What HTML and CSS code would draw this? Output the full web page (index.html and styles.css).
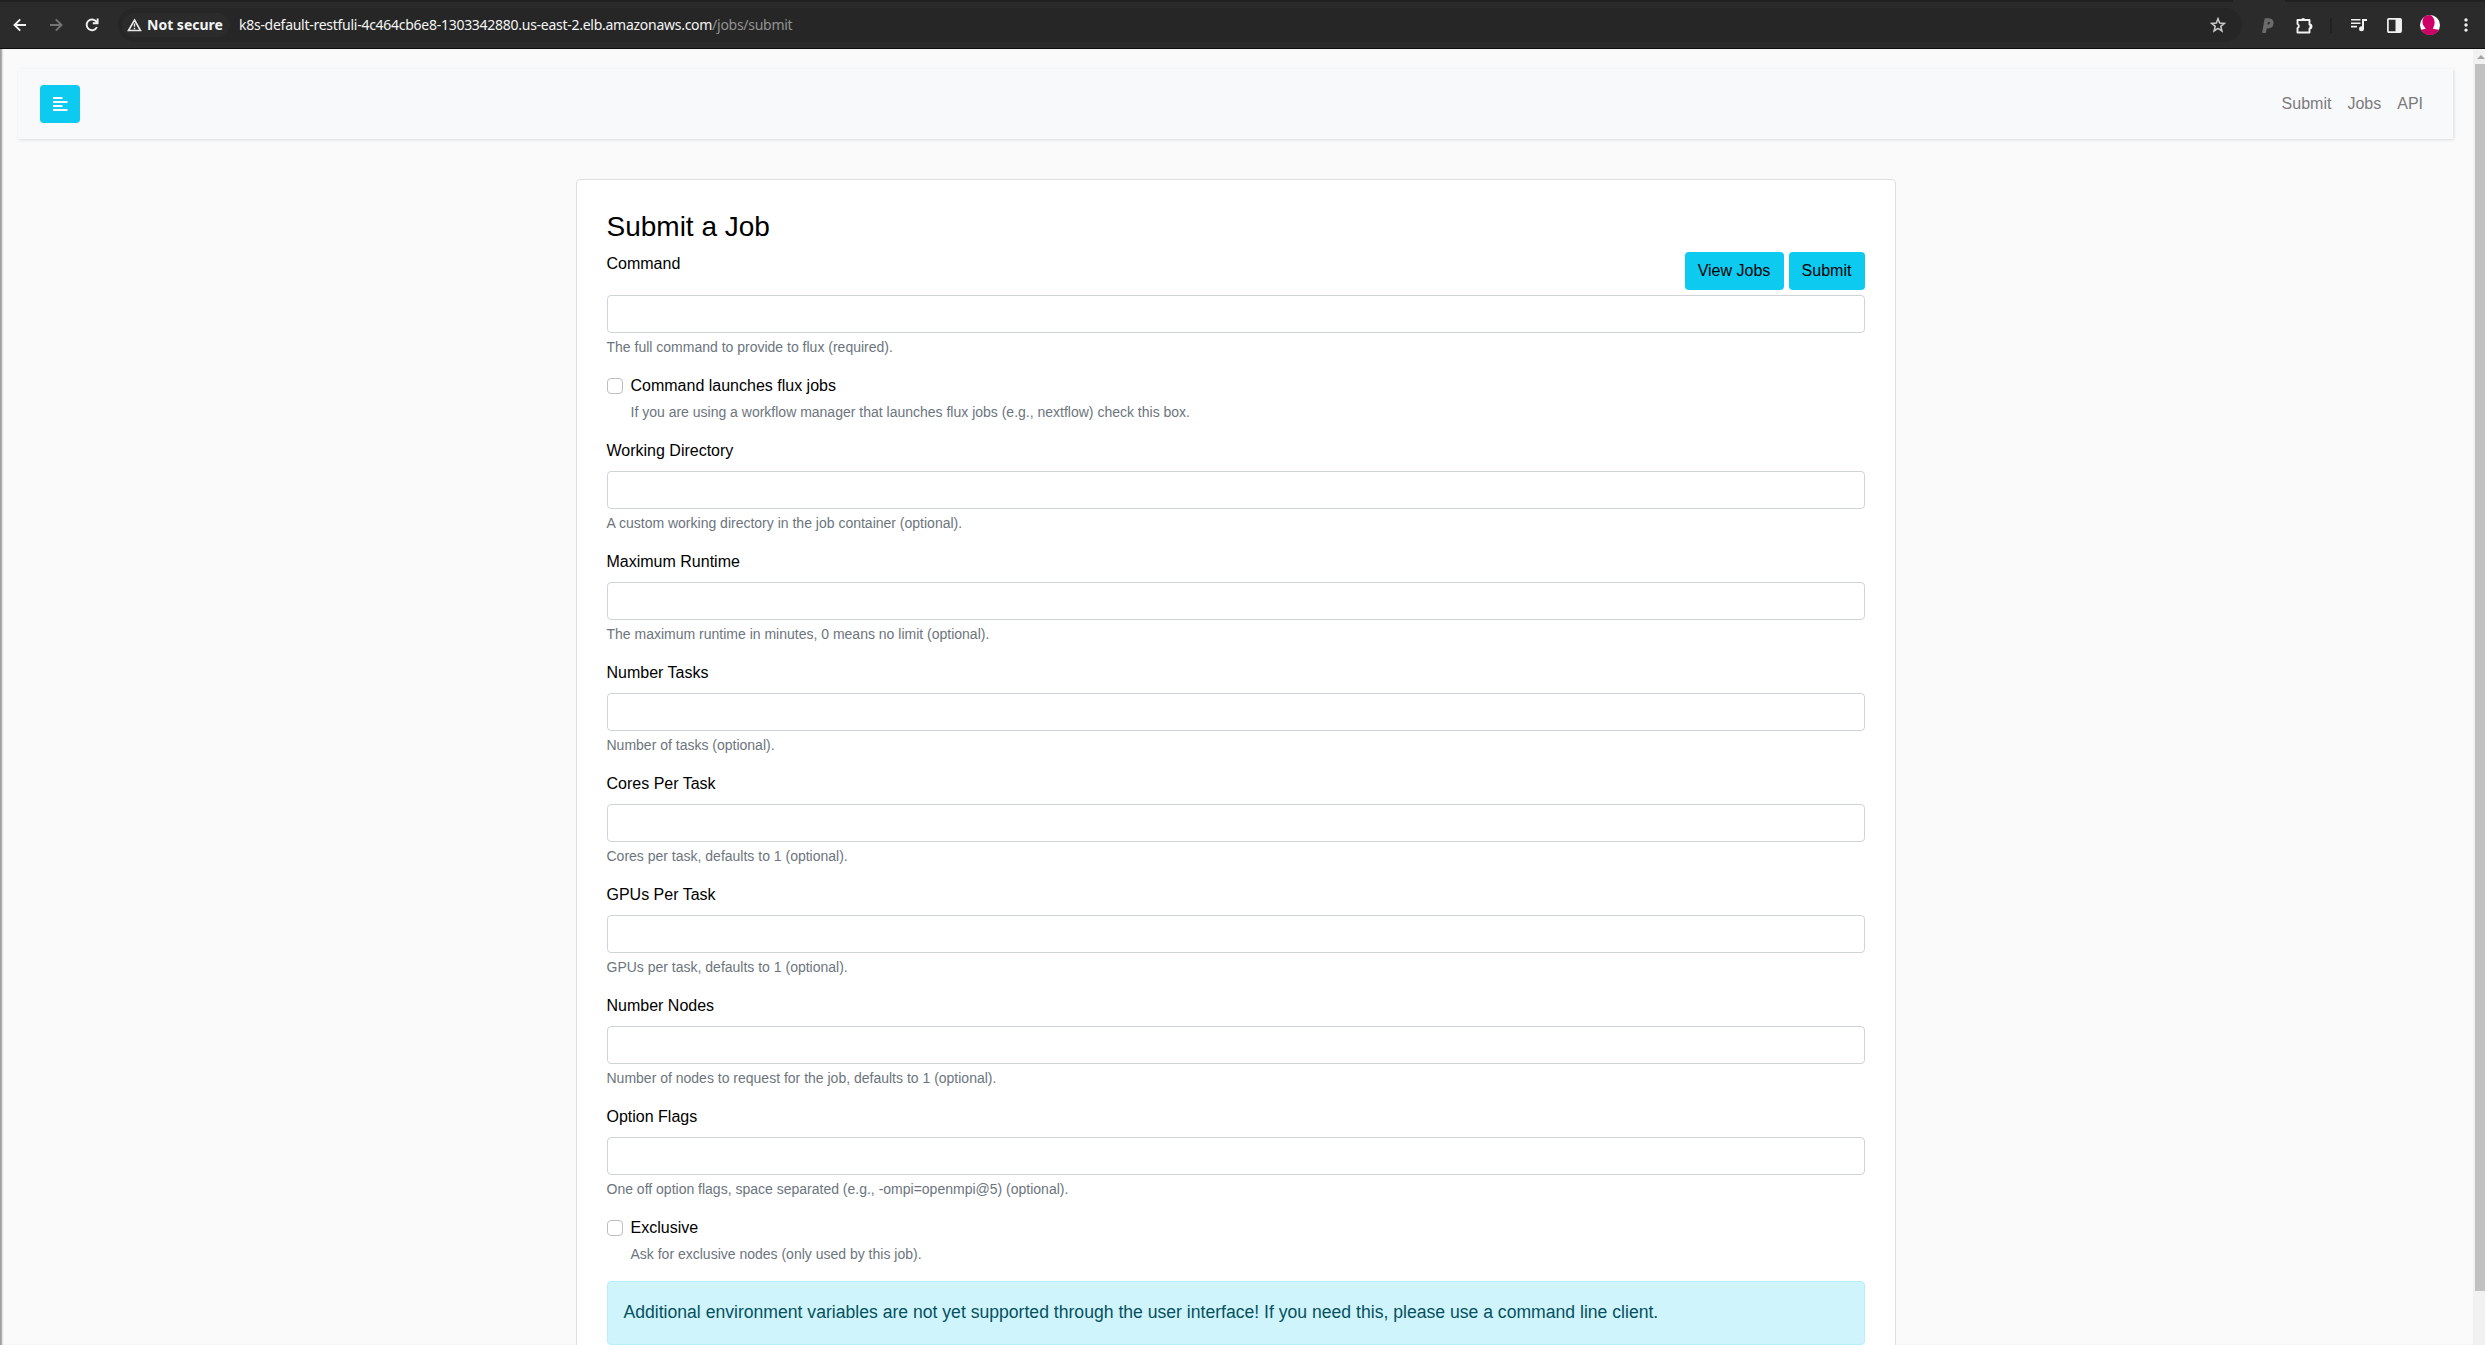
FILE: index.html
```html
<!DOCTYPE html>
<html lang="en">
<head>
<meta charset="utf-8">
<title>Submit a Job</title>
<link rel="stylesheet" href="styles.css">
</head>
<body>
<header class="toolbar">
  <span class="active-tab"></span>
  <svg class="tool back" width="14" height="14" viewBox="0 0 14 14" fill="none" stroke="#f1f1f1" stroke-width="1.9"><path d="M13 7H2M7.2 1.3 1.5 7l5.7 5.7"/></svg>
  <svg class="tool forward" width="14" height="14" viewBox="0 0 14 14" fill="none" stroke="#757575" stroke-width="1.9"><path d="M1 7h11M6.800 1.300 12.500 7l-5.700 5.700"/></svg>
  <svg class="tool" width="14" height="14" viewBox="0 0 14 14" fill="none" stroke="#f1f1f1" stroke-width="1.9"><path d="M11.900 9.200A5.400 5.400 0 1 1 11.300 3.500L12.500 4.800M12.600 .4v4.900H7.800"/></svg>
  <div class="omnibox">
    <div class="security">
      <svg width="15" height="14" viewBox="0 0 15 14" fill="none" stroke="#e8e8e8" stroke-width="1.6"><path d="M7.500 2 13.500 12.500h-12z"/><path d="M7.500 5.500v3.300M7.500 9.800v1.400" stroke-width="1.400"/></svg>
      <span class="security-text">Not secure</span>
    </div>
    <div class="url">k8s-default-restfuli-4c464cb6e8-1303342880.us-east-2.elb.amazonaws.com<span class="path">/jobs/submit</span></div>
    <svg class="star" width="16" height="16" viewBox="0 0 16 16" fill="none" stroke="#c8c8c8" stroke-width="1.6"><path d="m8 1.800 1.700 4.300 4.600.3-3.500 3 1.100 4.500L8 11.400l-3.900 2.500 1.100-4.500-3.500-3 4.600-.3z"/></svg>
  </div>
  <div class="actions">
    <svg width="12" height="15" viewBox="0 0 12 15" fill="none" stroke="#6b6b6b" stroke-width="3.8"><path d="M2 15 4.300 2.200h2.700c3.800 0 3.600 6.300-1 6.300H4"/></svg>
    <svg class="puzzle" width="18" height="17" viewBox="0 0 18 17"><path d="M2.500 3h12v4.500a2 2 0 0 1 0 4V15.500h-12v-4.300a2.300 2.300 0 0 0 0-4.200z" fill="none" stroke="#f1f1f1" stroke-width="1.900" stroke-linejoin="round"/><path d="M6.200 3a2 2 0 0 1 4 0zM14.500 7.300a2 2 0 0 1 0 4z" fill="#f1f1f1"/></svg>
    <span class="divider"></span>
    <svg class="queue" width="16" height="13" viewBox="0 0 16 13" fill="#f1f1f1"><path d="M0 0h9.500v1.600H0zM0 3.400h9.500V5H0zM0 6.800h6v1.600H0zM11 0h5v2h-3v8h-2z"/><circle cx="10.500" cy="9.700" r="2.500"/></svg>
    <svg class="panel" width="15" height="15" viewBox="0 0 15 15"><rect x=".9" y=".9" width="13.200" height="13.200" rx="1" fill="none" stroke="#f1f1f1" stroke-width="1.700"/><path d="M8.500 1H14v13H8.500z" fill="#f1f1f1"/></svg>
    <svg class="avatar" width="20" height="20" viewBox="0 0 20 20"><circle cx="10" cy="10" r="10" fill="#fff"/><path d="M8 .2C4 1 2 4 2.500 7.500c.3 3.500 2.700 4.700 3.300 6.300L1.200 14.800A10 10 0 0 0 18.800 14.800L13 13.800c.2-1.800 1.900-3.500 1.600-7C14.300 3 12 .8 10 0z" fill="#cd0067"/></svg>
    <svg class="more" width="4" height="14" viewBox="0 0 4 14" fill="#f1f1f1"><circle cx="2" cy="1.900" r="1.700"/><circle cx="2" cy="7" r="1.700"/><circle cx="2" cy="12.100" r="1.700"/></svg>
  </div>
</header>
<div class="viewport">
  <div class="page">
    <nav class="navbar">
      <button class="btn menu" type="button" aria-label="Toggle sidebar">
        <svg width="15" height="14" viewBox="0 0 15 14" fill="#fff"><path d="M0 0h9.500v2H0zM0 4h14.500v2H0zM0 8h9.500v2H0zM0 12h14.500v2H0z"/></svg>
      </button>
      <div class="links"><a>Submit</a><a>Jobs</a><a>API</a></div>
    </nav>
    <main class="card">
      <h1>Submit a Job</h1>
      <div class="field command">
        <div class="command-head"><label for="command">Command</label><div class="buttons"><button class="btn view" type="button">View Jobs</button><button class="btn submit" type="button">Submit</button></div></div>
        <input class="control" id="command"><div class="help">The full command to provide to flux (required).</div>
      </div>
      <div class="check"><input type="checkbox" id="launcher"><div><label for="launcher">Command launches flux jobs</label><div class="help">If you are using a workflow manager that launches flux jobs (e.g., nextflow) check this box.</div></div></div>
      <div class="field"><label for="workdir">Working Directory</label><input class="control" id="workdir"><div class="help">A custom working directory in the job container (optional).</div></div>
      <div class="field"><label for="runtime">Maximum Runtime</label><input class="control" id="runtime"><div class="help">The maximum runtime in minutes, 0 means no limit (optional).</div></div>
      <div class="field"><label for="tasks">Number Tasks</label><input class="control" id="tasks"><div class="help">Number of tasks (optional).</div></div>
      <div class="field"><label for="cores">Cores Per Task</label><input class="control" id="cores"><div class="help">Cores per task, defaults to 1 (optional).</div></div>
      <div class="field"><label for="gpus">GPUs Per Task</label><input class="control" id="gpus"><div class="help">GPUs per task, defaults to 1 (optional).</div></div>
      <div class="field"><label for="nodes">Number Nodes</label><input class="control" id="nodes"><div class="help">Number of nodes to request for the job, defaults to 1 (optional).</div></div>
      <div class="field"><label for="flags">Option Flags</label><input class="control" id="flags"><div class="help">One off option flags, space separated (e.g., -ompi=openmpi@5) (optional).</div></div>
      <div class="check"><input type="checkbox" id="exclusive"><div><label for="exclusive">Exclusive</label><div class="help">Ask for exclusive nodes (only used by this job).</div></div></div>
      <div class="alert">Additional environment variables are not yet supported through the user interface! If you need this, please use a command line client.</div>
    </main>
  </div>
  <div class="scrollbar"><span class="arrow"></span><span class="thumb"></span></div>
</div>
</body>
</html>
```
FILE: styles.css
```css
* { box-sizing: border-box; }
html, body { margin: 0; height: 100%; overflow: hidden; }
body { display: flex; flex-direction: column; background: #fafafa; color: #000; font: 16px/24px "Liberation Sans", Arial, sans-serif; }
svg { display: block; flex: none; }

.toolbar { position: relative; flex: none; height: 49px; padding: 0 12px 0 13px; display: flex; align-items: center; background: #2b2b2b; border-top: 2px solid #202020; border-bottom: 1px solid #0e0e0e; }
.active-tab { position: absolute; top: -2px; left: 2233px; width: 52px; height: 2px; background: #2b2b2b; }
.tool { margin-right: 22px; }
.tool + .omnibox { margin-left: -3px; }
.omnibox { flex: none; width: 2124px; height: 34px; padding: 0 16px 0 4px; display: flex; align-items: center; border-radius: 17px; background: #262626; font-family: "Noto Sans", sans-serif; font-size: 14px; color: #f4f4f4; }
.security { width: 108px; height: 24px; padding-left: 5px; display: flex; align-items: center; gap: 5px; border-radius: 12px; background: #2b2b2b; }
.security-text { font-weight: 700; font-size: 14px; white-space: nowrap; }
.url { margin-left: 9px; flex: 1; white-space: nowrap; letter-spacing: -.27px; }
.path { color: #929292; }
.actions { display: flex; align-items: center; margin-left: 20px; }
.puzzle { margin-left: 21px; }
.divider { width: 2px; height: 16px; margin-left: 17px; background: #222; }
.queue { margin-left: 19px; }
.panel { margin-left: 20px; }
.avatar { margin-left: 18px; }
.more { margin-left: 24px; }

.viewport { flex: 1; min-height: 0; display: flex; }
.page { flex: 1; padding: 20px 20px 0 18px; box-shadow: inset 3px 0 2px -1px #999; overflow: hidden; }
.navbar { height: 70px; padding: 0 30px 0 22px; display: flex; align-items: center; justify-content: space-between; background: #f8f9fb; box-shadow: 1px 1px 3px rgba(0,0,0,.12); }
.links { display: flex; gap: 16px; color: #7b7b7b; }
.btn { height: 38px; padding: 0; border: 0; border-radius: 4px; background: #0dcaf0; color: #000; font: inherit; }
.menu { width: 40px; display: flex; justify-content: center; align-items: center; padding-bottom: 1px; }
.card { width: 1320px; height: 1400px; margin: 40px 0 0 557.5px; padding: 30px; border: 1px solid #dfdfdf; border-radius: 4px; background: #fff; }
h1 { margin: 0 0 8px; font-size: 28px; line-height: 34px; font-weight: 400; }
.field { display: flex; flex-direction: column; margin-bottom: 16px; }
label { display: block; }
.control { height: 38px; margin: 8px 0 4px; border: 1px solid #ced4da; border-radius: 4px; background: #fff; }
.command-head { display: flex; justify-content: space-between; }
.command .control { margin-top: 5px; }
.buttons { display: flex; gap: 5px; }
.view { width: 99px; }
.submit { width: 76px; }
.help { font-size: 14px; line-height: 21px; color: #6c757d; }
.check { display: flex; gap: 8px; margin-bottom: 16px; }
.check input { appearance: none; flex: none; width: 16px; height: 16px; margin: 4px 0 0; border: 1px solid #bfbfbf; border-radius: 4px; background: #fff; }
.check .help { margin-top: 4px; }
.alert { height: 64px; padding: 16px; border: 1px solid #b6effb; border-radius: 4px; background: #cff4fc; color: #055160; font-size: 17.6px; line-height: 28px; }

.scrollbar { width: 12px; padding: 6px 0 0 2px; background: #f1f1f1; overflow: hidden; }
.arrow { display: block; width: 8px; height: 4px; margin: 0 0 5px 2px; background: #a3a3a3; clip-path: polygon(50% 0, 100% 100%, 0 100%); }
.thumb { display: block; height: 1227px; background: #c1c1c1; }
```
